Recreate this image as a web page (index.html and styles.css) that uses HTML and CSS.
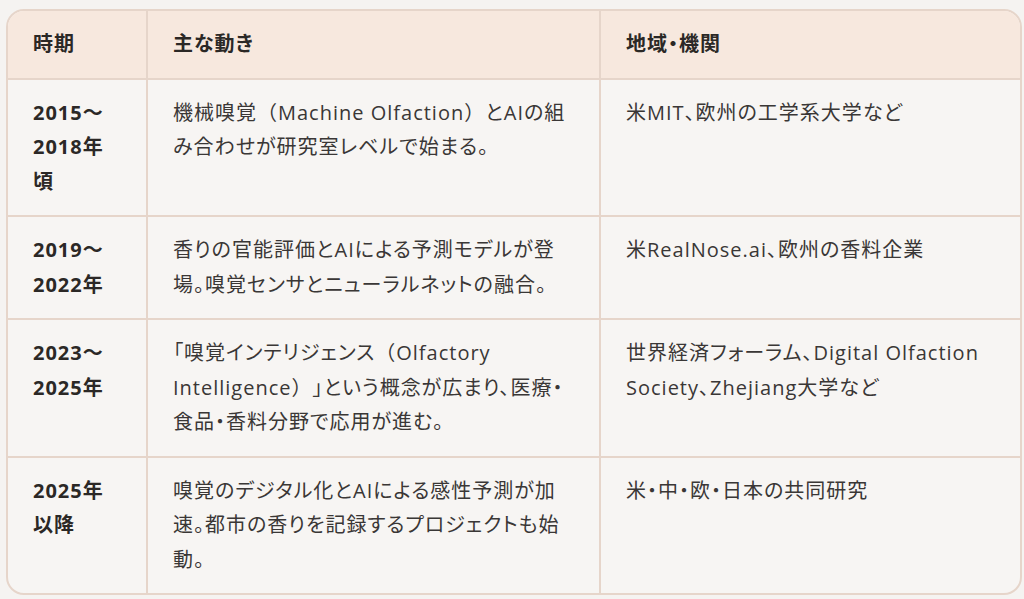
FILE: index.html
```html
<!DOCTYPE html>
<html lang="ja">
<head>
<meta charset="utf-8">
<link rel="stylesheet" href="styles.css">
</head>
<body>
<div class="frame">
<table class="tbl">
<colgroup><col class="c1"><col class="c2"><col class="c3"></colgroup>
<thead>
<tr><th>時期</th><th>主な動き</th><th>地域・機関</th></tr>
</thead>
<tbody>
<tr><td class="period">2015〜<br>2018年<br>頃</td><td>機械嗅覚<span class="fw">（Machine Olfaction）</span>とAIの組み合わせが研究室レベルで始まる。</td><td>米MIT、欧州の工学系大学など</td></tr>
<tr><td class="period">2019〜<br>2022年</td><td>香りの官能評価とAIによる予測モデルが登場。嗅覚センサとニューラルネットの融合。</td><td>米RealNose.ai、欧州の香料企業</td></tr>
<tr><td class="period">2023〜<br>2025年</td><td>「嗅覚インテリジェンス<span class="fw">（Olfactory Intelligence）</span>」という概念が広まり、医療・食品・香料分野で応用が進む。</td><td>世界経済フォーラム、Digital Olfaction Society、Zhejiang大学など</td></tr>
<tr><td class="period">2025年<br>以降</td><td>嗅覚のデジタル化とAIによる感性予測が加速。都市の香りを記録するプロジェクトも始動。</td><td>米・中・欧・日本の共同研究</td></tr>
</tbody>
</table>
</div>
</body>
</html>
```

FILE: styles.css
```css
html, body {
  margin: 0;
  background: #f5f3f1;
}
body {
  padding: 9px 2px 0 6px;
  font-family: "Open Sans", "Noto Sans CJK JP", sans-serif;
  font-size: 20px;
  letter-spacing: 0.05em;
  font-feature-settings: "palt";
  text-spacing-trim: space-all;
  color: #3a3736;
}
.frame {
  width: 1012px;
  border: 2px solid #e6d5ca;
  border-radius: 18px;
  overflow: hidden;
  background: #f7f5f3;
}
.tbl {
  width: 100%;
  border-collapse: collapse;
  table-layout: fixed;
}
.c1 { width: 139px; }
.c2 { width: 453px; }
.c3 { width: auto; }
th, td {
  text-align: left;
  vertical-align: top;
  padding: 16px 24px 16px 25px;
  line-height: 34.5px;
  border: 2px solid #e6d5ca;
}
tr > :first-child { border-left: none; }
tr > :last-child { border-right: none; }
thead th { border-top: none; }
tbody tr:last-child td { border-bottom: none; }
th {
  background: #f7e8de;
  font-weight: 700;
  color: #2b2826;
}
td.period {
  font-weight: 700;
  color: #2b2826;
}
.fw {
  font-feature-settings: normal;
}
```
